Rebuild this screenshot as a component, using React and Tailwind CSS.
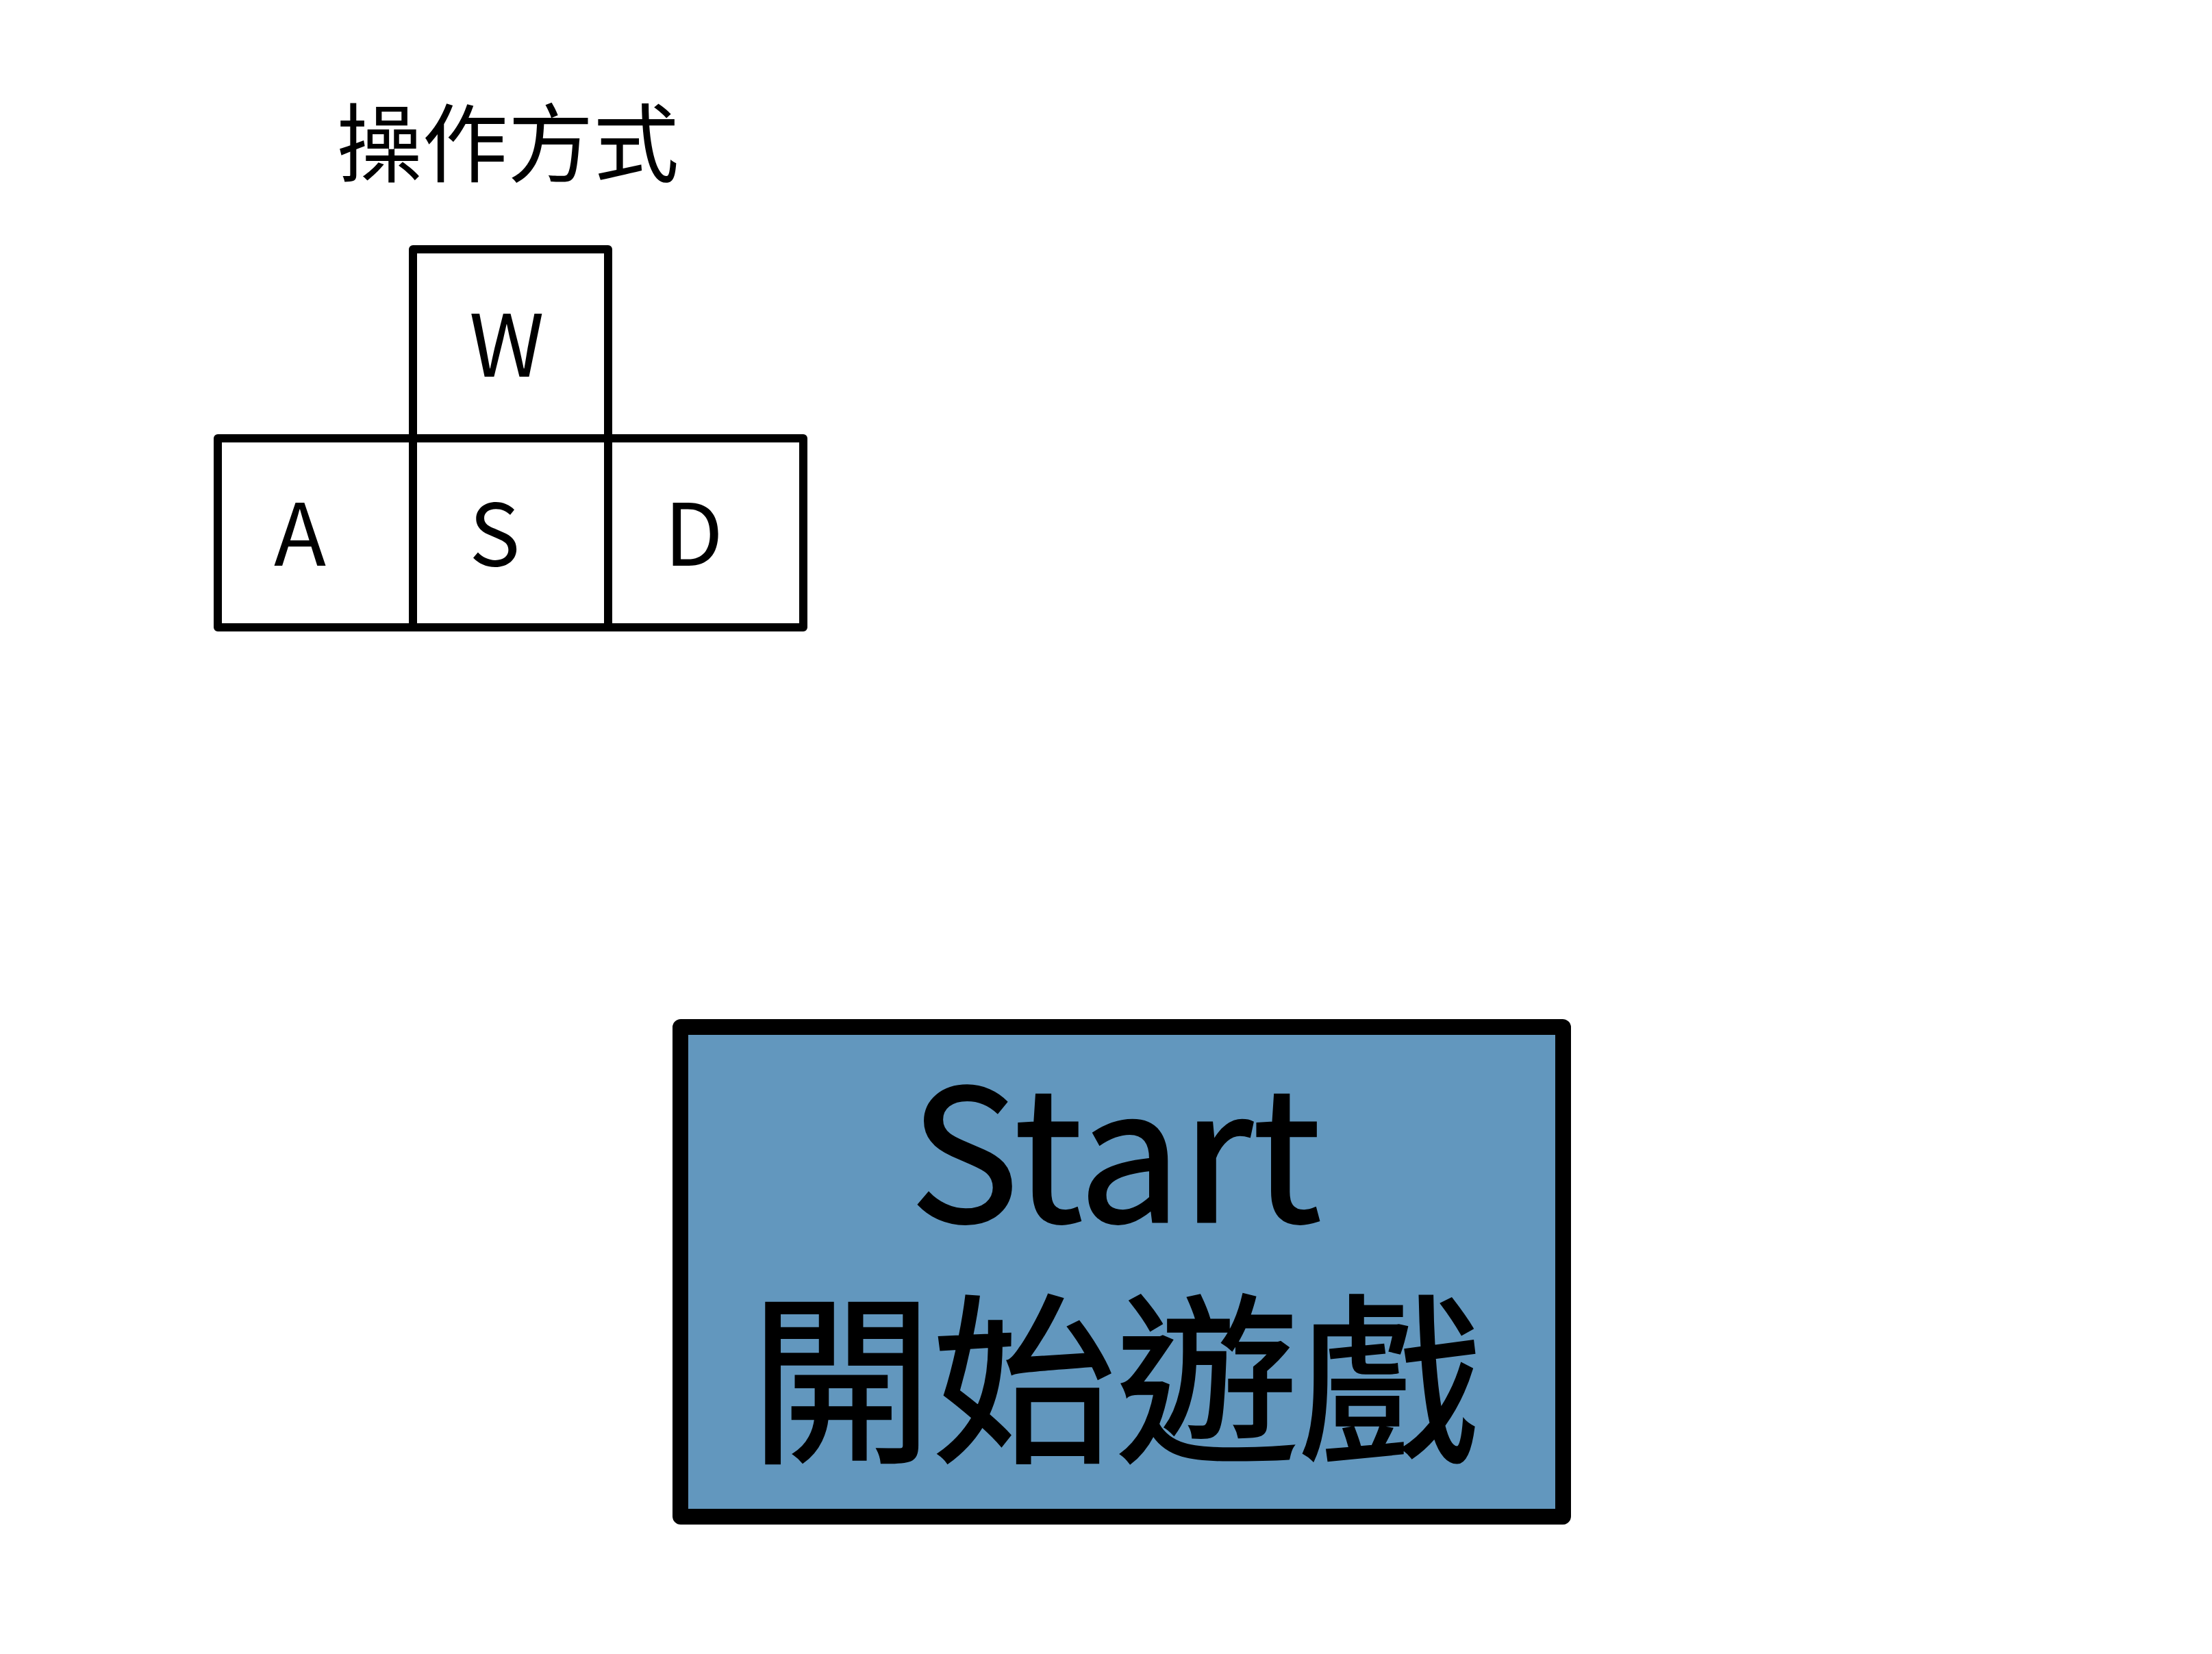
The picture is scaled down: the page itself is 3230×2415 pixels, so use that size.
const KEY =
  "flex h-[288px] items-center rounded-md border-[12px] border-black pb-[13px] pl-[76px] text-[125px] leading-none";

const keys = [
  { label: "W", place: "col-start-2 -mx-3" },
  { label: "A", place: "col-start-1 row-start-2 -mt-3" },
  { label: "S", place: "col-start-2 row-start-2 -mt-3 -mx-3" },
  { label: "D", place: "col-start-3 row-start-2 -mt-3" },
];

function KeyGuide() {
  return (
    <section aria-labelledby="controls" className="w-[867px] max-w-full">
      <h1 id="controls" className="pr-2 text-center text-[125px] leading-[180px]">
        操作方式
      </h1>
      <div className="mt-[66px] grid grid-cols-[297px_273px_297px]">
        {keys.map(({ label, place }) => (
          <kbd key={label} className={`${KEY} ${place} font-[inherit]`}>
            {label}
          </kbd>
        ))}
      </div>
    </section>
  );
}

export default function App() {
  return (
    <main
      lang="zh-Hant"
      className="flex min-h-screen flex-col items-start bg-white pt-28 pl-[312px] font-['Noto_Sans_CJK_TC',sans-serif] text-black"
    >
      <KeyGuide />
      <button
        type="button"
        className="mt-[566px] ml-[670px] flex w-[1312px] max-w-full flex-col items-center gap-[17px] rounded-xl border-[23px] border-black bg-[#6297be] pr-[18px] pb-[47px] text-[267px] leading-[314px] [-webkit-text-stroke:3px_black]"
      >
        <span>Start</span>
        <span>開始遊戲</span>
      </button>
    </main>
  );
}
